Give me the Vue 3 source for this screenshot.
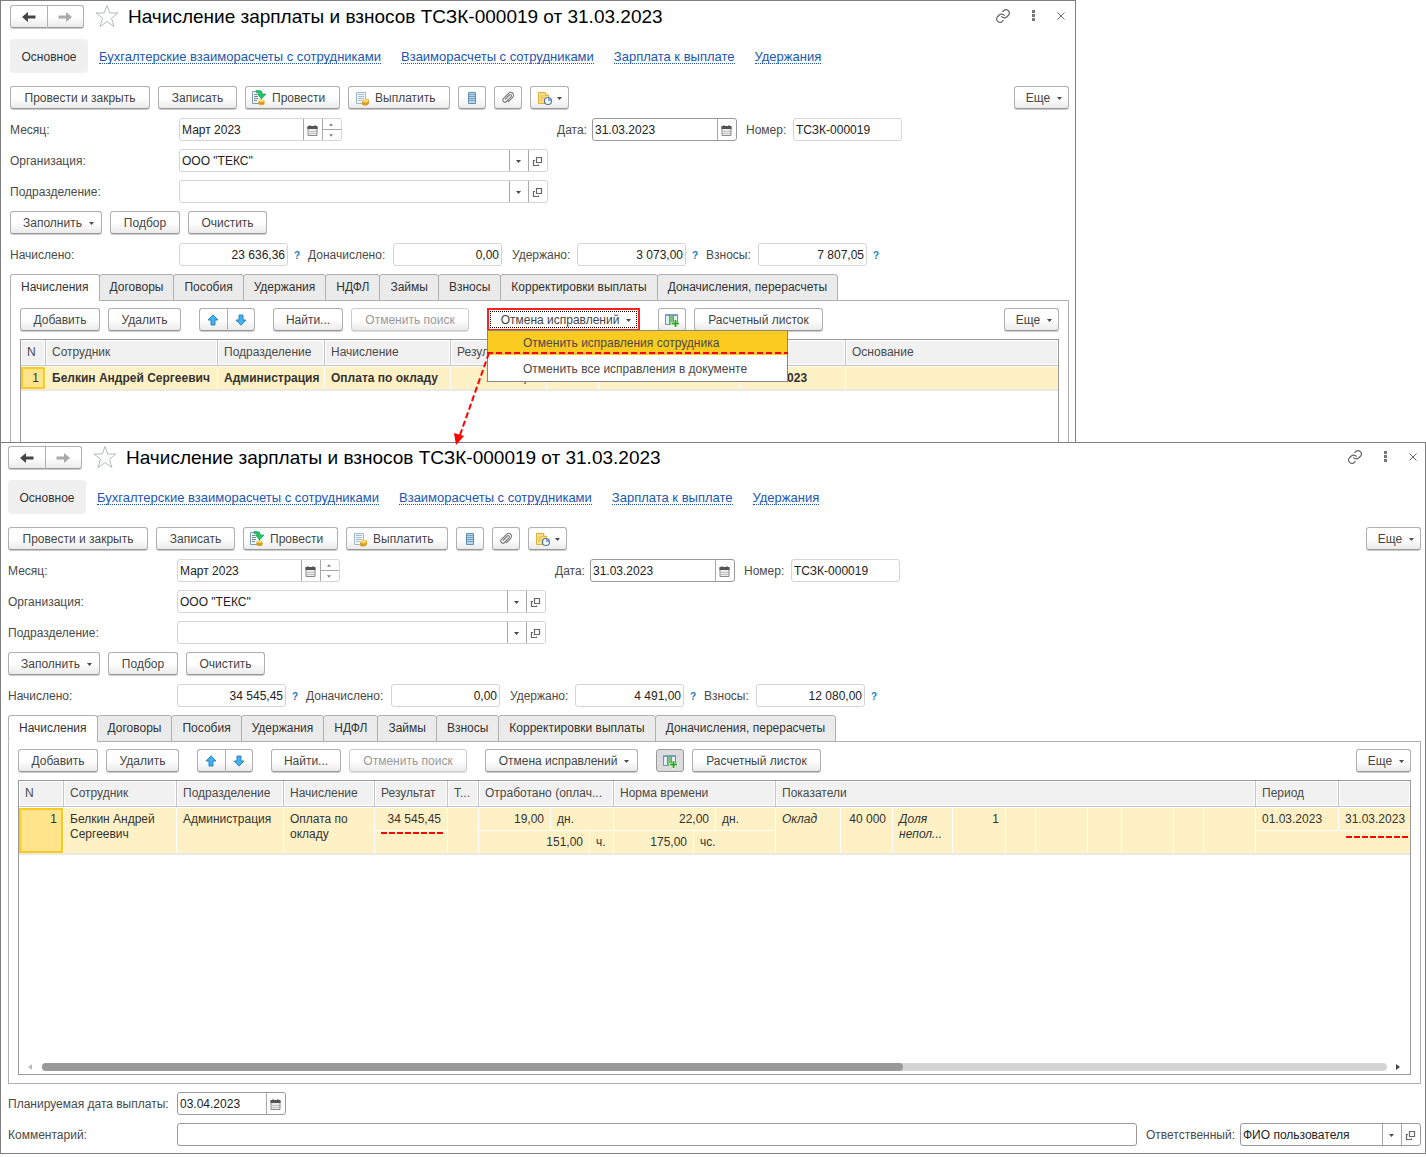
<script setup>
const sections = [
  'Бухгалтерские взаиморасчеты с сотрудниками',
  'Взаиморасчеты с сотрудниками',
  'Зарплата к выплате',
  'Удержания'
]

const tabs = [
  'Начисления', 'Договоры', 'Пособия', 'Удержания', 'НДФЛ', 'Займы',
  'Взносы', 'Корректировки выплаты', 'Доначисления, перерасчеты'
]

const documents = [
  { id: 'before', accrued: '23 636,36', extra: '0,00', withheld: '3 073,00', fees: '7 807,05', menuOpen: true },
  { id: 'after', accrued: '34 545,45', extra: '0,00', withheld: '4 491,00', fees: '12 080,00', menuOpen: false }
]

const title = 'Начисление зарплаты и взносов ТСЗК-000019 от 31.03.2023'

const shortColumns = [25, 172, 107, 126, 96, 52, 142, 105, null]
const wideColumns = [
  45, 113, 107, 91, 73, 31, 72, 39, 24, 80, 22, 60,
  65, 52, 60, 53, 30, 52, 34, 52, 30, null, 83, 71
]
const colStyle = (w) => (w ? { width: w + 'px' } : {})
</script>

<template>
  <svg class="sprite" aria-hidden="true">
    <symbol id="i-back" viewBox="0 0 16 12"><path d="M1 6l6-5v3.500h7.500v3H7V11z" /></symbol>
    <symbol id="i-star" viewBox="0 0 24 24">
      <path d="M12 1.500l2.800 7.500h8.200l-6.500 5.200 2.400 8.300L12 17.600 5.100 22.500l2.400-8.300L1 9h8.200z" fill="#fff" stroke="#b4bac0" />
    </symbol>
    <symbol id="i-link" viewBox="0 0 24 24">
      <g fill="none" stroke="#666" stroke-width="1.800" stroke-linecap="round">
        <path d="M10 13a5 5 0 0 0 7.500.5l3-3a5 5 0 0 0-7-7l-1.800 1.700" />
        <path d="M14 11a5 5 0 0 0-7.500-.5l-3 3a5 5 0 0 0 7 7l1.700-1.700" />
      </g>
    </symbol>
    <symbol id="i-dots" viewBox="0 0 4 12"><path d="M0 0h3v3H0zM0 4h3v3H0zM0 8h3v3H0z" fill="#777" /></symbol>
    <symbol id="i-close" viewBox="0 0 8 8"><path d="M.5.5l7 7M7.500.5l-7 7" stroke="#666" /></symbol>
    <symbol id="i-post" viewBox="0 0 16 16">
      <path d="M1.500 1.500h9v12h-9z" fill="#f4f8fb" stroke="#7f9ab0" />
      <path d="M3 4.500h3M3 6.500h4M3 8.500h4M3 10.500h3" stroke="#6f8599" />
      <path d="M5 .5h3q3 0 3.500 3.500H15L10.500 9 6.500 4h2Q8 2.500 5 2.500z" fill="#21c468" stroke="#129a4b" stroke-width=".6" />
      <path d="M7.500 10.500v3.500c0 1.600 6 1.600 6 0v-3.500z" fill="#e2a92b" />
      <ellipse cx="10.500" cy="10.600" rx="3" ry="1.300" fill="#fbdc6c" />
      <path d="M7.500 12.500c1 1 5 1 6 0" fill="none" stroke="#b87f16" stroke-width=".7" />
    </symbol>
    <symbol id="i-pay" viewBox="0 0 16 16">
      <path d="M2.500 2.500h9v11h-9z" fill="#f1f6fa" stroke="#9db8cc" />
      <path d="M4 4.500h6M4 6.500h6M4 8.500h6M4 10.500h4" stroke="#a9bccb" />
      <path d="M8 12c0-3 7-4 7-1.500v2.500c0 3-7 3.500-7 1z" fill="#dc9d25" />
      <ellipse cx="11.700" cy="10.700" rx="2.800" ry="1.700" fill="#fad76a" />
    </symbol>
    <symbol id="i-list" viewBox="0 0 16 16">
      <path d="M4.500 2.500h7v11h-7z" fill="#b9d8ea" stroke="#5f91b2" />
      <path d="M4 4.500h8M4 6.500h8M4 8.500h8M4 10.500h8" stroke="#5f91b2" stroke-width=".8" />
    </symbol>
    <symbol id="i-clip" viewBox="0 0 16 16">
      <path d="M5 9.500l4.300-4.500a1.200 1.200 0 0 1 1.800 1.700L6.500 11.500a2.200 2.200 0 0 1-3.200-3L8.500 3.300a2.900 2.900 0 0 1 4.200 4.100L8 12.200" fill="none" stroke="#777" stroke-width="1.100" />
    </symbol>
    <symbol id="i-note" viewBox="0 0 16 16">
      <path d="M1.500 2.500h7l3 3v8h-10z" fill="#fbdf84" stroke="#dfb03c" />
      <path d="M8.500 2.500v3h3" fill="#fff4c9" stroke="#dfb03c" />
      <path d="M3 6h5M3 8h4M3 10h3" stroke="#e2bb55" />
      <circle cx="11" cy="11" r="3.500" fill="#fff" stroke="#4f719f" stroke-width="1.200" />
      <path d="M11 11V7.500a3.500 3.500 0 0 1 3.500 3.500z" fill="#7da3d4" />
    </symbol>
    <symbol id="i-calendar" viewBox="0 0 10 11">
      <path d="M.5 1.500h9v9h-9z" fill="#ececec" stroke="#888" />
      <path d="M0 1h10v3H0z" fill="#555" />
      <path d="M2 0h1v2H2zM7 0h1v2H7z" fill="#555" />
      <path d="M2 6.500h7M2 8.500h7" stroke="#999" stroke-dasharray="1 1" />
    </symbol>
    <symbol id="i-open" viewBox="0 0 11 11">
      <path d="M4.500 1.500h5v5h-5z" fill="none" stroke="#666" stroke-width="1.200" />
      <path d="M3 4.500H1.500v5h5V8.500" fill="none" stroke="#666" stroke-width="1.200" />
    </symbol>
    <symbol id="i-caret" viewBox="0 0 5 3"><path d="M0 0h5L2.500 3z" fill="#4a4a4a" /></symbol>
    <symbol id="i-up" viewBox="0 0 12 12">
      <path d="M6 .8l5 5.200H8v5H4V6H1z" fill="#47b0ee" stroke="#1d7db5" stroke-width=".9" />
    </symbol>
    <symbol id="i-down" viewBox="0 0 12 12">
      <path d="M6 11.200L1 6h3V1h4v5h3z" fill="#47b0ee" stroke="#1d7db5" stroke-width=".9" />
    </symbol>
    <symbol id="i-columns" viewBox="0 0 16 16">
      <path d="M1.500 2.500h12v10h-12z" fill="#e4eef5" stroke="#6f94ad" />
      <path d="M1 2h13v2H1z" fill="#7d9fb7" />
      <path d="M5.500 4h4v9h-4z" fill="#7cc07a" />
      <path d="M5.500 3v10M9.500 3v10" stroke="#6f94ad" />
      <path d="M11.500 7.500v8M7.500 11.500h8" stroke="#fff" stroke-width="3" />
      <path d="M11.500 8v7M8 11.500h7" stroke="#35a52e" stroke-width="2" />
    </symbol>
  </svg>

  <main class="page">
    <section v-for="doc in documents" :key="doc.id" class="window" :class="doc.id">
      <header class="title-bar">
        <div class="group history">
          <button class="btn" aria-label="Назад"><svg class="arrow"><use href="#i-back" /></svg></button>
          <button class="btn" aria-label="Вперед"><svg class="arrow forward"><use href="#i-back" /></svg></button>
        </div>
        <svg class="star"><use href="#i-star" /></svg>
        <h1>{{ title }}</h1>
        <div class="window-tools">
          <button class="plain" aria-label="Ссылка"><svg width="16" height="16"><use href="#i-link" /></svg></button>
          <button class="plain" aria-label="Меню"><svg width="4" height="12"><use href="#i-dots" /></svg></button>
          <button class="plain" aria-label="Закрыть"><svg width="8" height="8"><use href="#i-close" /></svg></button>
        </div>
      </header>

      <nav class="sections">
        <span class="current">Основное</span>
        <a v-for="s in sections" :key="s" href="#">{{ s }}</a>
      </nav>

      <div class="bar">
        <button class="btn w140">Провести и закрыть</button>
        <button class="btn w79">Записать</button>
        <button class="btn w95 with-icon"><svg class="ico"><use href="#i-post" /></svg>Провести</button>
        <button class="btn w102 with-icon"><svg class="ico"><use href="#i-pay" /></svg>Выплатить</button>
        <button class="btn w28" aria-label="Список"><svg class="ico"><use href="#i-list" /></svg></button>
        <button class="btn w28" aria-label="Файлы"><svg class="ico"><use href="#i-clip" /></svg></button>
        <button class="btn w39" aria-label="Напоминание"><svg class="ico"><use href="#i-note" /></svg><svg class="caret"><use href="#i-caret" /></svg></button>
        <button class="btn w55 last">Еще<svg class="caret"><use href="#i-caret" /></svg></button>
      </div>

      <div class="row">
        <label class="lead" :for="doc.id + '-month'">Месяц:</label>
        <div class="field month">
          <input :id="doc.id + '-month'" value="Март 2023">
          <button class="cell" aria-label="Календарь"><svg class="glyph"><use href="#i-calendar" /></svg></button>
          <span class="spin">
            <button aria-label="Больше"><svg class="tick up"><use href="#i-caret" /></svg></button>
            <button aria-label="Меньше"><svg class="tick"><use href="#i-caret" /></svg></button>
          </span>
        </div>
        <label class="date-label" :for="doc.id + '-date'">Дата:</label>
        <div class="field strong date">
          <input :id="doc.id + '-date'" value="31.03.2023">
          <button class="cell" aria-label="Календарь"><svg class="glyph"><use href="#i-calendar" /></svg></button>
        </div>
        <label class="number-label" :for="doc.id + '-number'">Номер:</label>
        <div class="field short"><input :id="doc.id + '-number'" value="ТСЗК-000019"></div>
      </div>

      <div class="row">
        <label class="lead" :for="doc.id + '-org'">Организация:</label>
        <div class="field long">
          <select :id="doc.id + '-org'"><option>ООО "ТЕКС"</option></select>
          <span class="cell"><svg class="caret"><use href="#i-caret" /></svg></span>
          <button class="cell" aria-label="Открыть"><svg class="glyph"><use href="#i-open" /></svg></button>
        </div>
      </div>

      <div class="row">
        <label class="lead" :for="doc.id + '-dep'">Подразделение:</label>
        <div class="field long">
          <select :id="doc.id + '-dep'"><option></option></select>
          <span class="cell"><svg class="caret"><use href="#i-caret" /></svg></span>
          <button class="cell" aria-label="Открыть"><svg class="glyph"><use href="#i-open" /></svg></button>
        </div>
      </div>

      <div class="bar fill">
        <button class="btn w92">Заполнить<svg class="caret"><use href="#i-caret" /></svg></button>
        <button class="btn w70">Подбор</button>
        <button class="btn w79">Очистить</button>
      </div>

      <div class="row totals">
        <label class="lead" :for="doc.id + '-accrued'">Начислено:</label>
        <div class="field short num"><input :id="doc.id + '-accrued'" :value="doc.accrued"></div>
        <button class="help">?</button>
        <label class="extra" :for="doc.id + '-extra'">Доначислено:</label>
        <div class="field short num"><input :id="doc.id + '-extra'" :value="doc.extra"></div>
        <label class="withheld" :for="doc.id + '-withheld'">Удержано:</label>
        <div class="field short num"><input :id="doc.id + '-withheld'" :value="doc.withheld"></div>
        <button class="help">?</button>
        <label class="fees" :for="doc.id + '-fees'">Взносы:</label>
        <div class="field short num"><input :id="doc.id + '-fees'" :value="doc.fees"></div>
        <button class="help">?</button>
      </div>

      <div class="tabs" role="tablist">
        <button v-for="(t, i) in tabs" :key="t" class="tab" :class="{ active: i === 0 }" role="tab" :aria-selected="i === 0">{{ t }}</button>
      </div>

      <div class="panel">
        <div class="bar">
          <button class="btn w80">Добавить</button>
          <button class="btn w73">Удалить</button>
          <div class="group move">
            <button class="btn" aria-label="Вверх"><svg class="dir"><use href="#i-up" /></svg></button>
            <button class="btn" aria-label="Вниз"><svg class="dir"><use href="#i-down" /></svg></button>
          </div>
          <button class="btn w70">Найти...</button>
          <button class="btn w118" disabled>Отменить поиск</button>
          <div class="undo">
            <button class="btn w153" :class="{ marked: doc.menuOpen }">Отмена исправлений<svg class="caret"><use href="#i-caret" /></svg></button>
            <div v-if="doc.menuOpen" class="menu" role="menu">
              <button class="item chosen" role="menuitem">Отменить исправления сотрудника</button>
              <button class="item" role="menuitem">Отменить все исправления в документе</button>
              <svg class="pointer" aria-hidden="true">
                <path d="M36 2L7 84" stroke="#f00" stroke-width="2" stroke-dasharray="6 3" />
                <path d="M1 82l10 3-8 9z" fill="#f00" />
              </svg>
            </div>
          </div>
          <button class="btn w28" :class="{ pressed: !doc.menuOpen }" aria-label="Колонки"><svg class="ico"><use href="#i-columns" /></svg></button>
          <button class="btn w129">Расчетный листок</button>
          <button class="btn w55 last">Еще<svg class="caret"><use href="#i-caret" /></svg></button>
        </div>

        <div class="grid">
          <table v-if="doc.menuOpen" class="brief">
            <colgroup><col v-for="(w, i) in shortColumns" :key="i" :style="colStyle(w)"></colgroup>
            <thead>
              <tr>
                <th>N</th><th>Сотрудник</th><th>Подразделение</th><th>Начисление</th>
                <th>Результат</th><th></th><th></th><th></th><th>Основание</th>
              </tr>
            </thead>
            <tbody>
              <tr>
                <td class="key">1</td><td>Белкин Андрей Сергеевич</td><td>Администрация</td><td>Оплата по окладу</td>
                <td class="r">23 636,36</td><td></td><td></td><td>31.03.2023</td><td></td>
              </tr>
            </tbody>
          </table>

          <table v-else>
            <colgroup><col v-for="(w, i) in wideColumns" :key="i" :style="colStyle(w)"></colgroup>
            <thead>
              <tr>
                <th>N</th><th>Сотрудник</th><th>Подразделение</th><th>Начисление</th><th>Результат</th><th>Т...</th>
                <th colspan="3">Отработано (оплач...</th><th colspan="3">Норма времени</th>
                <th colspan="10">Показатели</th><th>Период</th><th></th>
              </tr>
            </thead>
            <tbody>
              <tr>
                <td class="key" rowspan="2">1</td>
                <td rowspan="2">Белкин Андрей Сергеевич</td>
                <td rowspan="2">Администрация</td>
                <td rowspan="2">Оплата по окладу</td>
                <td class="r">34 545,45</td>
                <td rowspan="2"></td>
                <td class="r">19,00</td><td colspan="2">дн.</td>
                <td class="r" colspan="2">22,00</td><td>дн.</td>
                <td class="i" rowspan="2">Оклад</td>
                <td class="r" rowspan="2">40 000</td>
                <td class="i" rowspan="2">Доля непол...</td>
                <td class="r" rowspan="2">1</td>
                <td v-for="n in 6" :key="n" rowspan="2"></td>
                <td>01.03.2023</td><td>31.03.2023</td>
              </tr>
              <tr>
                <td class="underlined"><div class="dash"></div></td>
                <td class="r" colspan="2">151,00</td><td>ч.</td>
                <td class="r">175,00</td><td colspan="2">чс.</td>
                <td class="underlined end" colspan="2"><div class="dash"></div></td>
              </tr>
            </tbody>
          </table>

          <div v-if="!doc.menuOpen" class="scroll">
            <svg width="5" height="6"><path d="M4 0v6L0 3z" fill="#bbb" /></svg>
            <div class="track"><div class="thumb"></div></div>
            <svg width="5" height="6"><path d="M0 0v6l4-3z" fill="#444" /></svg>
          </div>
        </div>
      </div>

      <footer v-if="!doc.menuOpen">
        <div class="row">
          <label class="lead" for="pay-date">Планируемая дата выплаты:</label>
          <div class="field strong short">
            <input id="pay-date" value="03.04.2023">
            <button class="cell" aria-label="Календарь"><svg class="glyph"><use href="#i-calendar" /></svg></button>
          </div>
        </div>
        <div class="row">
          <label class="lead" for="comment">Комментарий:</label>
          <div class="field strong grow"><input id="comment" value=""></div>
          <label class="person-label" for="person">Ответственный:</label>
          <div class="field strong person">
            <select id="person"><option>ФИО пользователя</option></select>
            <span class="cell"><svg class="caret"><use href="#i-caret" /></svg></span>
            <button class="cell" aria-label="Открыть"><svg class="glyph"><use href="#i-open" /></svg></button>
          </div>
        </div>
      </footer>
    </section>
  </main>
</template>

<style>
body { background: #fff; }
</style>

<style scoped>
* { box-sizing: border-box; }
.sprite { position: absolute; width: 0; height: 0; }
.page { font: 12px/15px "Liberation Sans", Arial, sans-serif; color: #4a4a4a; }
button, input, select { font: inherit; color: inherit; margin: 0; }
svg { display: block; flex: none; }

.window { border: 1px solid #7f7f7f; background: #fff; }
.before { width: calc(100% - 350px); padding: 3px 6px 0 9px; border-bottom: 0; }
.after { padding: 2px 4px 7px 7px; }

.title-bar { display: flex; align-items: center; height: 24px; }
.title-bar h1 { margin: 0 0 0 9px; padding-top: 1px; font-size: 19px; line-height: 24px; font-weight: 400; color: #000; white-space: nowrap; }
.star { width: 24px; height: 24px; margin-left: 11px; }
.history { width: 74px; }
.arrow { width: 16px; height: 12px; fill: #444; }
.forward { transform: scaleX(-1); fill: #aaa; }
.window-tools { margin-left: auto; display: flex; align-items: center; gap: 21px; padding-right: 4px; }
.plain { display: flex; border: 0; padding: 0; background: none; }

.sections { display: flex; align-items: center; gap: 20px; height: 34px; margin-top: 11px; }
.current { display: flex; align-items: center; justify-content: center; width: 78px; height: 34px; margin-right: -9px; padding-top: 2px; background: #f0f0f0; border-radius: 4px; color: #333; }
.sections a { margin-top: 2px; color: #1a56b0; text-decoration: none; border-bottom: 1px dotted #1a56b0; font-size: 13px; line-height: 13px; white-space: nowrap; }

.bar { display: flex; gap: 8px; margin-top: 13px; height: 24px; }
.btn {
  display: flex; align-items: center; justify-content: center; height: 23px; padding: 1px 0 0; white-space: nowrap;
  border: 1px solid #b0b0b0; border-bottom-color: #999; border-radius: 3px; color: #444;
  background: linear-gradient(#fff 50%, #ebebeb); box-shadow: 0 1px 0 #ccc;
}
.btn:disabled { color: #999; border-color: #ccc; box-shadow: 0 1px 0 #ddd; }
.btn .caret { margin: 1px 0 0 7px; }
.last { margin-left: auto; }
.w28 { width: 28px; }
.w39 { width: 39px; }
.w55 { width: 55px; padding-left: 5px; }
.w70 { width: 70px; }
.w73 { width: 73px; }
.w79 { width: 79px; }
.w80 { width: 80px; }
.w92 { width: 92px; padding-left: 5px; }
.w95 { width: 95px; }
.w102 { width: 102px; }
.w118 { width: 118px; }
.w129 { width: 129px; }
.w140 { width: 140px; }
.w153 { width: 153px; padding-left: 5px; }
.with-icon { justify-content: flex-start; gap: 5px; padding-left: 5px; }
.w39 .caret { margin-left: 4px; }
.ico { width: 16px; height: 16px; }
.caret { width: 5px; height: 3px; }
.dir { width: 12px; height: 12px; }
.group { display: flex; }
.group .btn { flex: 1; }
.group .btn:first-child { border-radius: 3px 0 0 3px; border-right: 0; }
.group .btn:last-child { border-radius: 0 3px 3px 0; }
.move { width: 56px; margin: 0 10px; }
.pressed { background: #dcdcdc; border-color: #999; box-shadow: none; }

.row { display: flex; align-items: center; height: 23px; margin-top: 8px; white-space: nowrap; }
.row label { padding-top: 1px; }
.lead { width: 169px; }
.field { display: flex; height: 23px; border: 1px solid #d4d4d4; border-radius: 3px; color: #222; background: #fff; }
.field input, .field select { flex: 1; min-width: 0; width: 0; border: 0; padding: 1px 2px 0; background: none; outline: 0; appearance: none; }
.cell { display: flex; align-items: center; justify-content: center; width: 19px; padding: 1px 1px 0 0; border: 0; border-left: 1px solid #a8a8a8; background: none; }
.glyph { width: 11px; height: 11px; }
.strong { border-color: #999; }
.num input { text-align: right; }
.month { width: 163px; }
.date { width: 145px; }
.short { width: 109px; }
.long { width: 369px; }
.person { width: 181px; }
.grow { flex: 1; }
.date-label { margin-left: 215px; width: 35px; }
.number-label { margin-left: 9px; width: 47px; }
.person-label { margin-left: 9px; width: 94px; }
.spin { display: flex; flex-direction: column; width: 19px; border-left: 1px solid #a8a8a8; }
.spin button { flex: 1; display: flex; align-items: center; justify-content: center; padding: 0 2px 0 0; border: 0; background: none; }
.spin button + button { border-top: 1px solid #a8a8a8; }
.tick { width: 4px; height: 3px; opacity: 0.7; }
.tick.up { transform: rotate(180deg); }
.fill { margin-top: 8px; }
.help { width: 20px; padding: 1px 2px 0 0; border: 0; background: none; color: #1a7fc4; font-weight: 700; font-size: 10px; }
.extra { width: 85px; }
.withheld { width: 65px; margin-left: 10px; }
.fees { width: 52px; }

.tabs { display: flex; margin-top: 8px; position: relative; }
.tab { height: 27px; padding: 0 10px; margin-right: -1px; border: 1px solid #b0b0b0; border-radius: 3px 3px 0 0; background: #ebebeb; color: #333; white-space: nowrap; }
.tab.active { background: #fff; border-bottom-color: #fff; }
.panel { margin-top: -1px; border: 1px solid #b0b0b0; padding: 7px 9px 8px; }
.before .panel { border-bottom: 0; padding-bottom: 0; }
.panel .bar { margin-top: 0; }
.undo { position: relative; margin: 0 10px; }
.marked { border: 2px solid #ff1f1f; border-radius: 0; background: #fff; outline: 1px dotted #000; outline-offset: -4px; box-shadow: none; }
.menu { position: absolute; z-index: 2; left: 0; top: 22px; width: 301px; border: 1px solid #888; background: #fff; }
.item { display: block; width: 100%; height: 26px; padding: 3px 35px 0; border: 0; background: none; text-align: left; white-space: nowrap; }
.chosen { height: 24px; padding-top: 0; background: #fbcb21; }
.menu::after { content: ""; position: absolute; left: -1px; right: -1px; top: 21px; height: 2px; background: repeating-linear-gradient(90deg, #f00 0 6px, transparent 6px 9px); }
.pointer { position: absolute; left: -35px; top: 20px; width: 40px; height: 96px; fill: none; }

.grid { display: flex; flex-direction: column; margin-top: 7px; border: 1px solid #999; height: 295px; }
.before .grid { height: 103px; border-bottom: 0; }
table { width: 100%; table-layout: fixed; border-collapse: separate; border-spacing: 0; border-bottom: 2px solid #ebe9e4; }
th { height: 26px; padding: 0 6px; text-align: left; font-weight: 400; background: #f1f1f1; border-right: 1px solid #c4c4c4; border-bottom: 1px solid #c4c4c4; box-shadow: inset 0 0 0 1px #fff; white-space: nowrap; overflow: hidden; }
td { height: 23px; padding: 4px 6px 2px; vertical-align: top; background: #fff1c6; border-right: 1px solid #fff; border-top: 1px solid #fff; color: #333; overflow: hidden; }
th:last-child, td:last-child { border-right: 0; }
.brief td { font-weight: 700; white-space: nowrap; }
.brief .key { font-weight: 400; }
.key { text-align: right; background: #ffe48c; box-shadow: inset 0 0 0 2px #fbc91f; }
.r { text-align: right; }
.i { font-style: italic; }
.underlined { padding-top: 1px; }
.underlined.end { padding: 5px 2px 0 0; }
.dash { height: 2px; width: 62px; background: repeating-linear-gradient(90deg, #f00 0 6px, transparent 6px 8px); }
.end .dash { margin-left: auto; }
.scroll { display: flex; align-items: center; justify-content: space-between; gap: 9px; margin-top: auto; height: 15px; padding: 0 9px; }
.track { flex: 1; height: 8px; border-radius: 4px; background: #d4d4d4; }
.thumb { width: 64%; height: 8px; border-radius: 4px; background: #999; }
</style>
